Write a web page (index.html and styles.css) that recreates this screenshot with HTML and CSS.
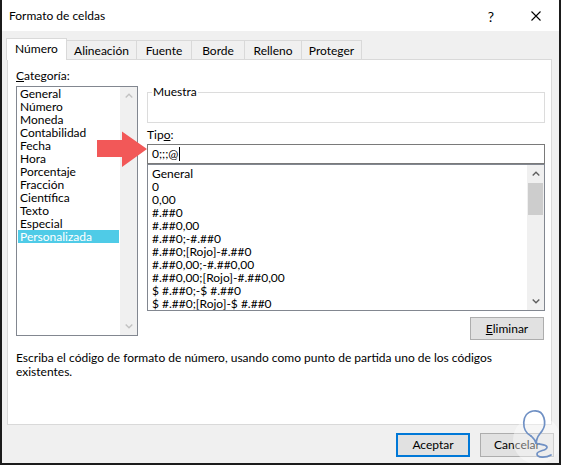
FILE: index.html
```html
<!DOCTYPE html>
<html lang="es">
<head>
<meta charset="utf-8">
<title>Formato de celdas</title>
<link rel="stylesheet" href="styles.css">
</head>
<body>
<div class="window">
  <div class="titlebar">
    <span class="title">Formato de celdas</span>
    <span class="help">?</span>
    <span class="close"><svg width="10" height="10" viewBox="0 0 10 10"><path d="M0.5 0.5 L9.5 9.5 M9.5 0.5 L0.5 9.5" stroke="#000" stroke-width="1.1" fill="none"/></svg></span>
  </div>
  <div class="tabs">
    <div class="tab active w-num">Número</div>
    <div class="tab w-ali">Alineación</div>
    <div class="tab w-fue">Fuente</div>
    <div class="tab w-bor">Borde</div>
    <div class="tab w-rel">Relleno</div>
    <div class="tab w-pro">Proteger</div>
  </div>
  <div class="panel">
    <div class="top">
      <div class="left">
        <div class="label"><u>C</u>ategoría:</div>
        <div class="catlist">
          <div class="items">
            <div class="item">General</div>
            <div class="item">Número</div>
            <div class="item">Moneda</div>
            <div class="item">Contabilidad</div>
            <div class="item">Fecha</div>
            <div class="item">Hora</div>
            <div class="item">Porcentaje</div>
            <div class="item">Fracción</div>
            <div class="item">Científica</div>
            <div class="item">Texto</div>
            <div class="item">Especial</div>
            <div class="item selected">Personalizada</div>
          </div>
          <div class="sb sb-off">
            <div class="sbtn"><svg width="8" height="5" viewBox="0 0 8 5"><polyline points="0.7,4.5 4,1.2 7.3,4.5" fill="none" stroke="currentColor" stroke-width="1.4"/></svg></div>
            <div class="sbtn"><svg width="8" height="5" viewBox="0 0 8 5"><polyline points="0.7,0.5 4,3.8 7.3,0.5" fill="none" stroke="currentColor" stroke-width="1.4"/></svg></div>
          </div>
        </div>
      </div>
      <div class="right">
        <div class="muestra"><span class="muestra-label">Muestra</span></div>
        <div class="label tipo">Tip<u>o</u>:</div>
        <div class="input">0;;;@<span class="caret"></span></div>
        <div class="typelist">
          <div class="titems">
            <div class="titem">General</div>
            <div class="titem">0</div>
            <div class="titem">0,00</div>
            <div class="titem">#.##0</div>
            <div class="titem">#.##0,00</div>
            <div class="titem">#.##0;-#.##0</div>
            <div class="titem">#.##0;[Rojo]-#.##0</div>
            <div class="titem">#.##0,00;-#.##0,00</div>
            <div class="titem">#.##0,00;[Rojo]-#.##0,00</div>
            <div class="titem">$ #.##0;-$ #.##0</div>
            <div class="titem">$ #.##0;[Rojo]-$ #.##0</div>
          </div>
          <div class="sb sb-on">
            <div class="sbtn"><svg width="8" height="5" viewBox="0 0 8 5"><polyline points="0.7,4.5 4,1.2 7.3,4.5" fill="none" stroke="currentColor" stroke-width="1.4"/></svg></div>
            <div class="thumb"></div>
            <div class="spacer"></div>
            <div class="sbtn"><svg width="8" height="5" viewBox="0 0 8 5"><polyline points="0.7,0.5 4,3.8 7.3,0.5" fill="none" stroke="currentColor" stroke-width="1.4"/></svg></div>
          </div>
        </div>
        <div class="btn eliminar"><u>E</u>liminar</div>
      </div>
    </div>
    <p class="desc">Escriba el código de formato de número, usando como punto de partida uno de los códigos<br>existentes.</p>
  </div>
  <div class="buttons">
    <div class="btn default">Aceptar</div>
    <div class="btn">Cancelar</div>
  </div>

  <svg class="arrow" width="52" height="38" viewBox="0 0 52 38"><polygon points="1,10 26,10 26,1.5 51,19 26,37 26,27 1,27" fill="#f25858"/></svg>

  <svg class="watermark" width="56" height="60" viewBox="0 0 56 60">
    <circle cx="32" cy="35" r="24" fill="rgba(255,255,255,0.4)"/>
    <path d="M26 31 C16 26 16 8 28 6 C40 4 42 19 37 26 C35 29 33 30 32 34 L31 38" fill="none" stroke="#6f90c4" stroke-width="1.7" stroke-linecap="round" stroke-linejoin="round"/>
    <path d="M26 31 C28 33 30 34 31 38" fill="none" stroke="#6f90c4" stroke-width="1.7" stroke-linecap="round"/>
    <path d="M31 38 C34 40 41 39 42 42 C43 46 32 45 32 49 C32 53 41 53 46 50" fill="none" stroke="#6f90c4" stroke-width="1.7" stroke-linecap="round"/>
  </svg>
</div>
</body>
</html>
```

FILE: styles.css
```css
* { box-sizing: border-box; }
html, body { margin: 0; padding: 0; }
body {
  width: 561px;
  height: 465px;
  overflow: hidden;
  font-family: Lato, "Open Sans", sans-serif;
  font-size: 12px;
  color: #000;
  background: #fff;
}
.window {
  position: relative;
  width: 561px;
  height: 465px;
  background: #f0f0f0;
  border: 2px solid #1b1b1b;
  border-top: 0;
  overflow: hidden;
}
.titlebar {
  height: 31px;
  background: #fff;
  display: flex;
  align-items: center;
  padding-left: 7px;
}
.title { flex: 1; line-height: 14px; margin-top: 1px; }
.help {
  width: 20px;
  text-align: center;
  font-size: 14px;
  margin-right: 12px;
  margin-top: 1px;
}
.close {
  width: 46px;
  height: 31px;
  display: flex;
  align-items: center;
  justify-content: center;
}
.tabs {
  display: flex;
  align-items: flex-end;
  height: 29px;
  margin-left: 4px;
  margin-bottom: -1px;
  position: relative;
  z-index: 1;
}
.tab {
  height: 19px;
  margin-bottom: 1px;
  margin-left: -1px;
  border: 1px solid #d9d9d9;
  border-bottom: 0;
  background: #f0f0f0;
  display: flex;
  align-items: center;
  justify-content: center;
  line-height: 14px;
  padding-top: 1px;
}
.tab.active {
  height: 22px;
  margin-bottom: 0;
  margin-left: 0;
  background: #fff;
  padding-top: 0;
  padding-bottom: 2px;
  position: relative;
  z-index: 2;
}
.w-num { width: 61px; }
.w-ali { width: 71px; }
.w-fue { width: 56px; }
.w-bor { width: 54px; }
.w-rel { width: 58px; }
.w-pro { width: 61px; }

.panel {
  margin-left: 5px;
  width: 545px;
  height: 366px;
  background: #fff;
  border: 1px solid #d9d9d9;
  padding: 9px 0 0 8px;
}
.top { display: flex; gap: 9px; }
.left { width: 122px; }
.label { line-height: 14px; height: 14px; }
.catlist {
  margin-top: 3px;
  height: 250px;
  border: 1px solid #828790;
  display: flex;
}
.items { flex: 1; padding: 0 1px; }
.item {
  height: 13px;
  line-height: 13px;
  padding-left: 2px;
  white-space: nowrap;
}
.item.selected { background: #4fcbe7; color: #fff; }
.sb {
  width: 17px;
  background: #f0f0f0;
  display: flex;
  flex-direction: column;
  justify-content: space-between;
}
.sbtn {
  height: 17px;
  display: flex;
  align-items: center;
  justify-content: center;
}
.sb-off { color: #c3c3c3; }
.sb-on { color: #606060; justify-content: flex-start; }
.thumb {
  height: 32px;
  margin: 1px 1px 0 1px;
  background: #cdcdcd;
}
.spacer { flex: 1; }

.right { width: 398px; display: flex; flex-direction: column; }
.muestra {
  margin-top: 23px;
  height: 31px;
  border: 1px solid #dcdcdc;
  position: relative;
}
.muestra-label {
  position: absolute;
  left: 4px;
  top: -8px;
  padding: 0 1px;
  background: #fff;
  line-height: 14px;
}
.tipo { margin-top: 5px; }
.input {
  margin-top: 2px;
  height: 20px;
  border: 1px solid #7a7a7a;
  padding-left: 4px;
  line-height: 18px;
  display: flex;
  align-items: center;
}
.caret {
  display: inline-block;
  width: 1px;
  height: 14px;
  background: #000;
  margin-left: 1px;
}
.typelist {
  height: 147px;
  border: 1px solid #828790;
  display: flex;
}
.titems { flex: 1; padding: 2px 0 0 4px; overflow: hidden; }
.titem { height: 13px; line-height: 13px; white-space: nowrap; }

.btn {
  width: 74px;
  height: 24px;
  border: 1px solid #adadad;
  background: #e1e1e1;
  display: flex;
  align-items: center;
  justify-content: center;
  line-height: 14px;
}
.eliminar {
  margin-top: 6px;
  align-self: flex-end;
  height: 23px;
  margin-right: 1px;
}
.btn.default { border: 2px solid #0078d7; }
.desc {
  margin: 11px 0 0 0;
  line-height: 14px;
  white-space: nowrap;
}
.buttons {
  display: flex;
  justify-content: flex-end;
  gap: 10px;
  margin-top: 8px;
  padding-right: 5px;
}
.arrow { position: absolute; left: 94px; top: 130px; }
.watermark { position: absolute; left: 503px; top: 405px; }
```
